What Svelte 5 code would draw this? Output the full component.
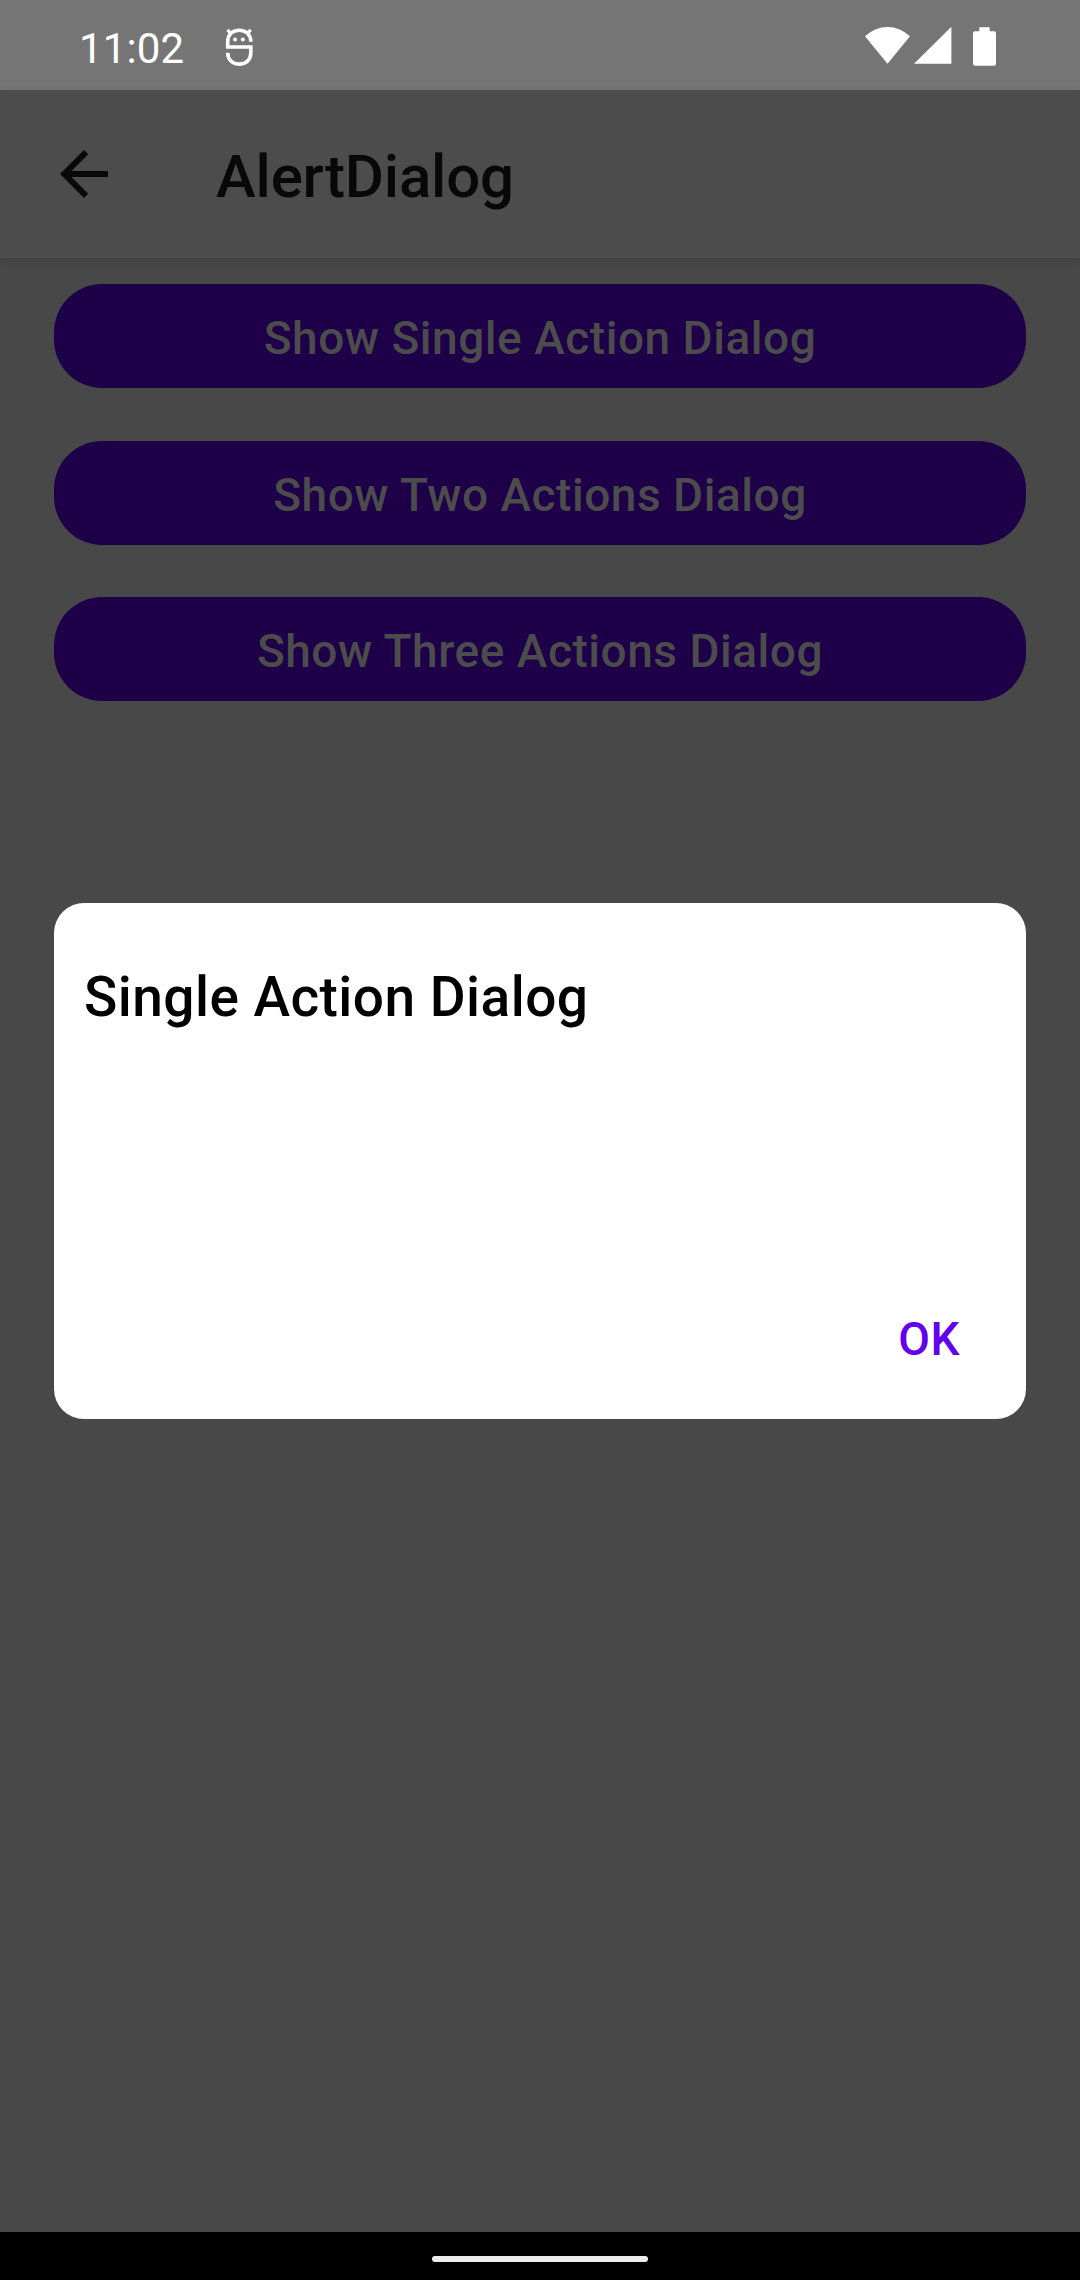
<script>
  const actions = [
    'Show Single Action Dialog',
    'Show Two Actions Dialog',
    'Show Three Actions Dialog'
  ];
</script>

<div class="screen">
  <header class="status">
    <span class="time">11:02</span>
    <svg class="debug" width="45" height="50" viewBox="0 0 45 50">
      <path
        d="M35.8 21.7C35.8 14.5 31 10.2 24.2 10.2S12.7 14.5 12.7 21.7V27H35.8V33C35.8 39.8 31 44.1 24.2 44.1S12.7 39.8 12.7 32.7"
        fill="none" stroke="#fff" stroke-width="3.6" />
      <path d="M12.4 9.8l3.8 3.8M35.8 9.8l-3.8 3.8" stroke="#fff" stroke-width="3.2" />
      <circle cx="20.1" cy="19.5" r="2" fill="#fff" />
      <circle cx="27.8" cy="19.5" r="2" fill="#fff" />
    </svg>
    <svg class="wifi" width="45" height="38" viewBox="0 0 45 38">
      <path d="M22.5 37.7L0 10.3A32 32 0 0 1 45 10.3Z" fill="#fff" />
    </svg>
    <svg class="signal" width="38" height="38" viewBox="0 0 38 38">
      <path d="M0 37.8L37.4 0.8V37.8Z" fill="#fff" />
    </svg>
    <svg class="battery" width="23" height="39" viewBox="0 0 23 39">
      <path d="M6.3 0.3H16.7V4.3H21Q23 4.3 23 6.3V36.8Q23 38.8 21 38.8H2Q0 38.8 0 36.8V6.3Q0 4.3 2 4.3H6.3Z" fill="#fff" />
    </svg>
  </header>

  <div class="appbar">
    <svg width="72" height="72" viewBox="0 0 24 24">
      <path d="M20 11H7.83l5.59-5.59L12 4l-8 8 8 8 1.41-1.41L7.83 13H20v-2z" fill="#080808" />
    </svg>
    <h1>AlertDialog</h1>
  </div>

  <main>
    {#each actions as label}
      <button class="action">{label}</button>
    {/each}
  </main>

  <footer class="nav"><span class="pill"></span></footer>

  <div class="overlay">
    <div class="dialog" role="dialog" aria-label="Single Action Dialog">
      <h2>Single Action Dialog</h2>
      <div class="buttons"><button class="ok">OK</button></div>
    </div>
  </div>
</div>

<style>
  :global(body) {
    margin: 0;
    background: #484848;
  }
  .screen {
    position: relative;
    display: flex;
    flex-direction: column;
    width: 1080px;
    height: 2280px;
    overflow: hidden;
    background: #484848;
    font-family: Roboto, sans-serif;
  }
  button {
    border: 0;
    margin: 0;
    font: 500 46px/56px Roboto, sans-serif;
    letter-spacing: 0.53px;
  }
  h1,
  h2 {
    margin: 0;
    font-weight: 500;
  }
  .status {
    display: flex;
    align-items: flex-start;
    flex: none;
    box-sizing: border-box;
    height: 90px;
    padding-left: 79px;
    background: #757575;
  }
  .time {
    width: 136px;
    margin-top: 24px;
    font-size: 42px;
    line-height: 49px;
    letter-spacing: 0.15px;
    color: #fff;
  }
  .debug {
    margin-top: 20px;
  }
  .wifi {
    margin: 26px 0 0 605px;
  }
  .signal {
    margin: 26px 0 0 4px;
  }
  .battery {
    margin: 27px 0 0 21px;
  }
  .appbar {
    display: flex;
    align-items: center;
    flex: none;
    box-sizing: border-box;
    height: 168px;
    padding-left: 48px;
    background: #4c4c4c;
    box-shadow: 0 2px 8px rgba(0, 0, 0, 0.14);
  }
  h1 {
    margin-left: 96px;
    padding-top: 5px;
    font-size: 60px;
    line-height: 70px;
    letter-spacing: -0.2px;
    color: #080808;
  }
  main {
    display: flex;
    flex: 1;
    flex-direction: column;
    gap: 52.5px;
    padding: 26px 54px 0;
  }
  .action {
    height: 104px;
    padding: 4px 0 0;
    border-radius: 48px;
    background: #1e0048;
    color: #4c4c4c;
  }
  .nav {
    display: flex;
    justify-content: center;
    flex: none;
    height: 48px;
    background: #000;
  }
  .pill {
    width: 216px;
    height: 6px;
    margin-top: 24px;
    border-radius: 3px;
    background: #ebebeb;
  }
  .overlay {
    position: absolute;
    inset: 90px 0 48px;
    display: flex;
    align-items: center;
    justify-content: center;
  }
  .dialog {
    display: flex;
    flex-direction: column;
    justify-content: space-between;
    box-sizing: border-box;
    width: 972px;
    height: 516px;
    padding: 62px 66px 52px 30px;
    border-radius: 30px;
    background: #fff;
  }
  h2 {
    font-size: 55px;
    line-height: 64px;
    letter-spacing: 0.46px;
    color: #000;
  }
  .buttons {
    display: flex;
    justify-content: flex-end;
  }
  .ok {
    padding: 0;
    background: none;
    color: #6200ee;
  }
</style>
